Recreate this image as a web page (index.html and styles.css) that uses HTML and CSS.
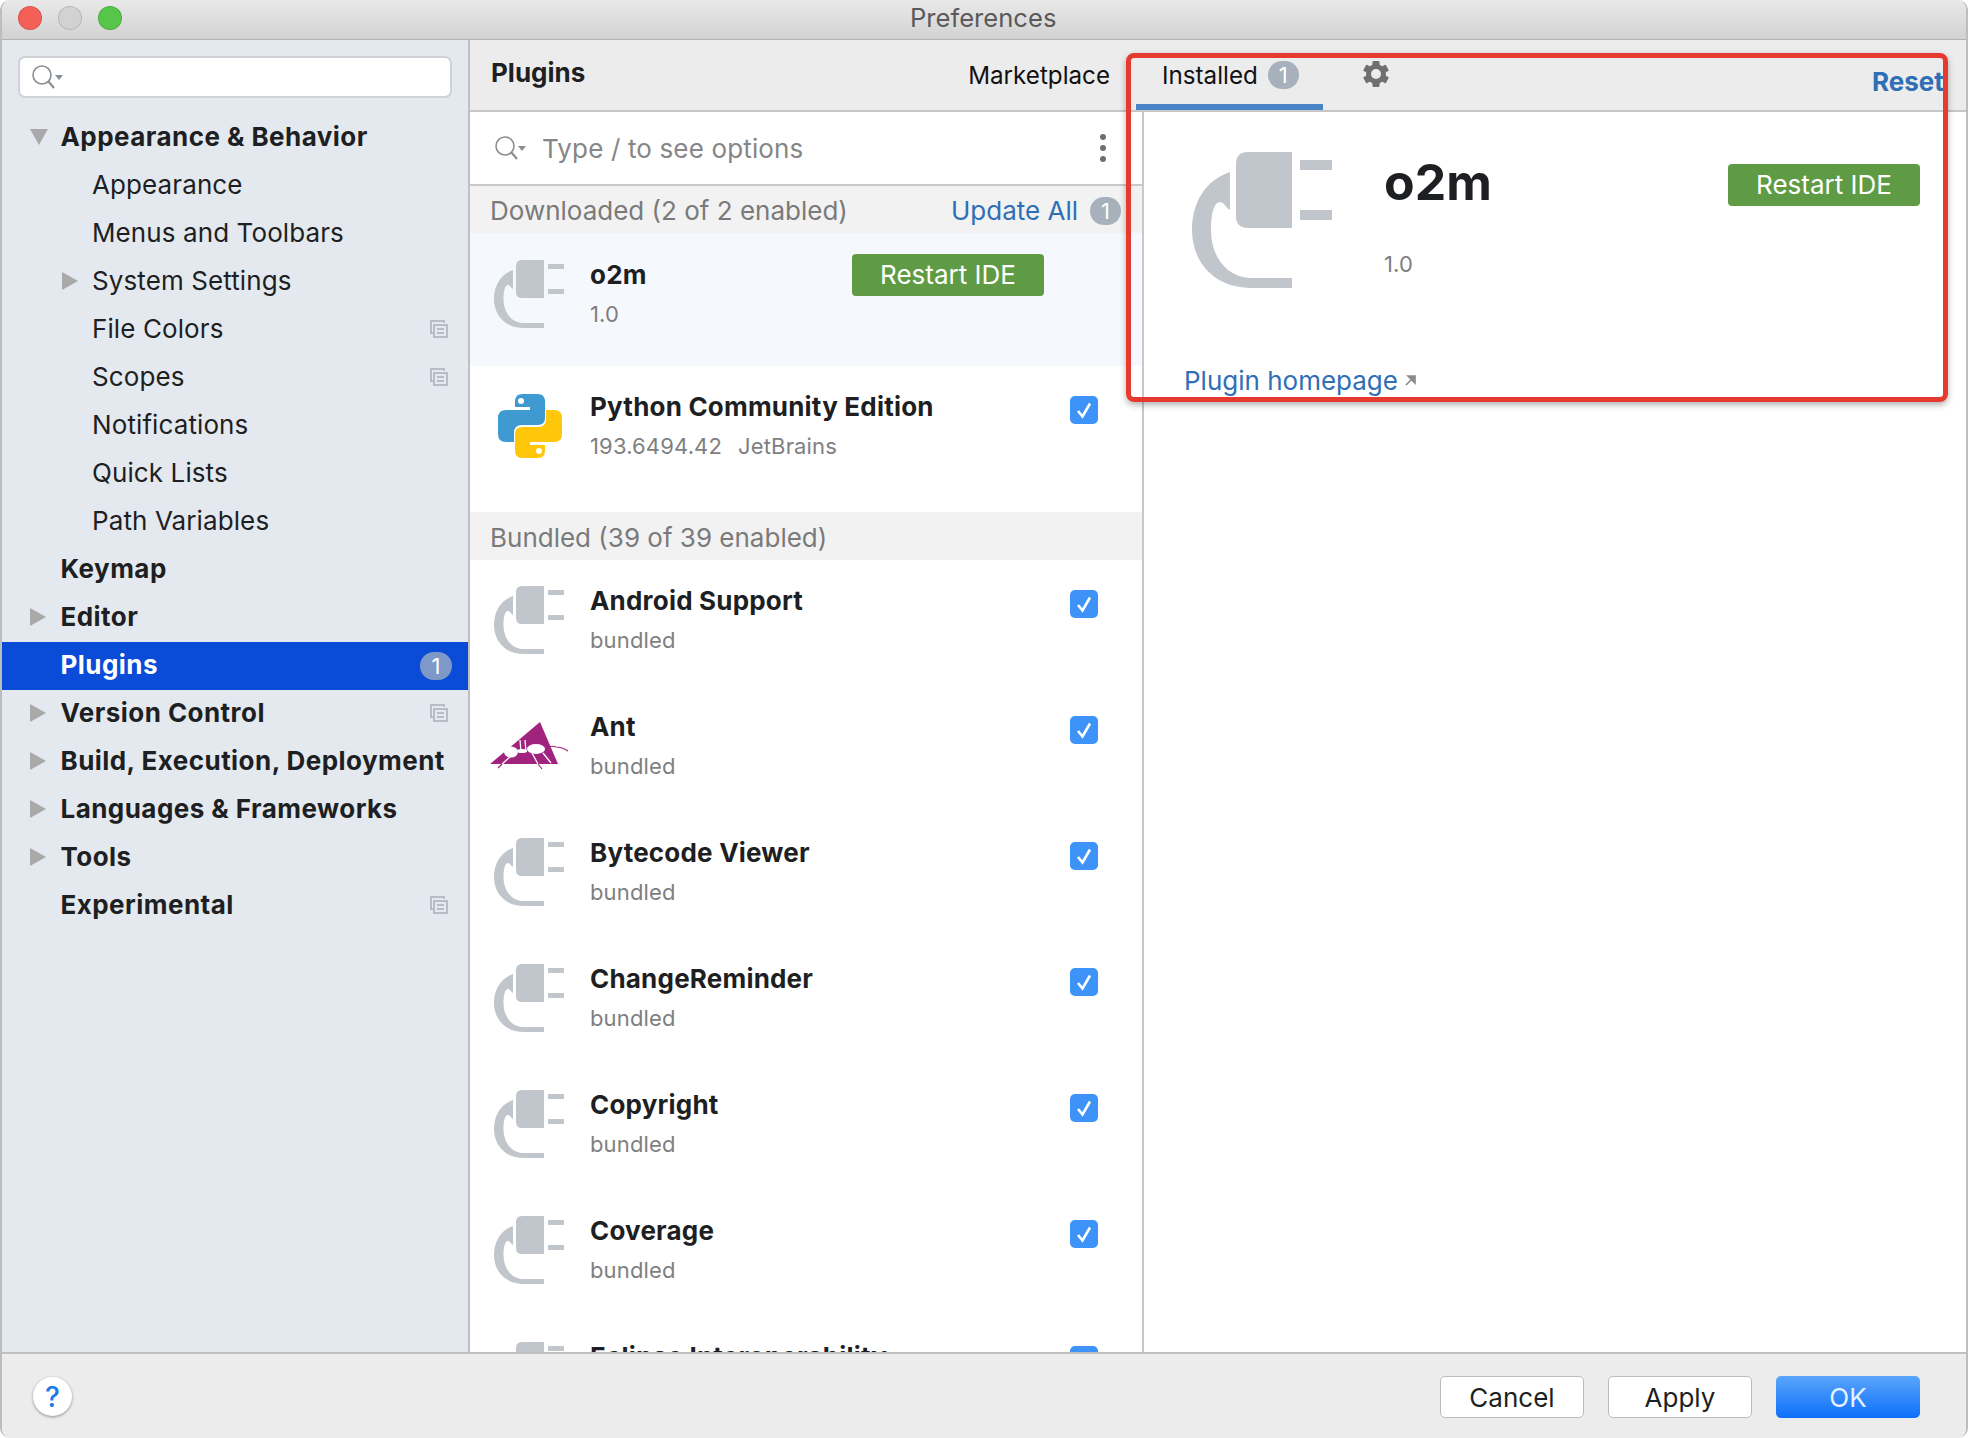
FILE: index.html
```html
<!DOCTYPE html>
<html lang="en">
<head>
    <meta charset="UTF-8">
    <meta name="viewport" content="width=device-width, initial-scale=1.0">
    <title>Preferences</title>
    <link rel="stylesheet" href="styles.css">
</head>
<body>
    <svg class="defs" aria-hidden="true">
        <symbol id="plug" viewBox="0 0 140 136">
            <path d="M44 12 Q44 0 56 0 H100 V76 H56 Q44 76 44 64 Z"/>
            <rect x="108" y="8" width="32" height="10"/>
            <rect x="108" y="58" width="32" height="10"/>
            <path d="M100 136 H60 C22 136 0 110 0 78 C0 50 14 28 38 20 V58 C34 56 32 50 28 50 C22 50 19 62 19 78 C19 106 36 126 60 126 H100 Z"/>
        </symbol>
        <symbol id="copy" viewBox="0 0 18 18">
            <path d="M14 3 V1 H1 V13 H3" fill="none" stroke="currentColor" stroke-width="1.5"/>
            <rect x="4" y="5" width="13" height="12" fill="none" stroke="currentColor" stroke-width="1.5"/>
            <path d="M7 9 H14 M7 13 H14" stroke="currentColor" stroke-width="1.5"/>
        </symbol>
        <symbol id="lens" viewBox="0 0 32 24">
            <circle cx="11" cy="10" r="9" fill="none" stroke="currentColor" stroke-width="1.6"/>
            <path d="M17 16 L23 23" stroke="currentColor" stroke-width="2.2"/>
            <path d="M24 10 H32 L28 15 Z" fill="currentColor"/>
        </symbol>
        <symbol id="check" viewBox="0 0 28 28">
            <rect width="28" height="28" rx="5" fill="#3d93f8"/>
            <path d="M8 15 L12.5 20.5 L20 7.5" fill="none" stroke="#fff" stroke-width="2.6"/>
        </symbol>
    </svg>

    <div class="window">
        <div class="titlebar">
            <span class="light light-red"></span>
            <span class="light light-gray"></span>
            <span class="light light-green"></span>
            <span class="window-title">Preferences</span>
        </div>

        <div class="main">
            <div class="sidebar">
                <div class="side-search">
                    <svg class="lens"><use href="#lens"/></svg>
                </div>
                <div class="tree">
                    <div class="row top"><span class="arrow arrow-down"></span>Appearance &amp; Behavior</div>
                    <div class="row sub"><span class="slot"></span>Appearance</div>
                    <div class="row sub"><span class="slot"></span>Menus and Toolbars</div>
                    <div class="row sub"><span class="arrow arrow-right"></span>System Settings</div>
                    <div class="row sub"><span class="slot"></span>File Colors<svg class="copy"><use href="#copy"/></svg></div>
                    <div class="row sub"><span class="slot"></span>Scopes<svg class="copy"><use href="#copy"/></svg></div>
                    <div class="row sub"><span class="slot"></span>Notifications</div>
                    <div class="row sub"><span class="slot"></span>Quick Lists</div>
                    <div class="row sub"><span class="slot"></span>Path Variables</div>
                    <div class="row top"><span class="slot"></span>Keymap</div>
                    <div class="row top"><span class="arrow arrow-right"></span>Editor</div>
                    <div class="row top selected"><span class="slot"></span>Plugins<span class="side-badge">1</span></div>
                    <div class="row top"><span class="arrow arrow-right"></span>Version Control<svg class="copy"><use href="#copy"/></svg></div>
                    <div class="row top"><span class="arrow arrow-right"></span>Build, Execution, Deployment</div>
                    <div class="row top"><span class="arrow arrow-right"></span>Languages &amp; Frameworks</div>
                    <div class="row top"><span class="arrow arrow-right"></span>Tools</div>
                    <div class="row top"><span class="slot"></span>Experimental<svg class="copy"><use href="#copy"/></svg></div>
                </div>
            </div>

            <div class="content">
                <div class="header">
                    <div class="header-left">
                        <span class="header-title">Plugins</span>
                        <span class="tab-label">Marketplace</span>
                    </div>
                    <div class="tab-active">
                        <span class="tab-label">Installed</span>
                        <span class="badge">1</span>
                    </div>
                    <svg class="gear" viewBox="0 0 26 26">
                        <g fill="#6f6f6f">
                            <rect x="9.5" y="0" width="7" height="26" rx="1"/>
                            <rect x="9.5" y="0" width="7" height="26" rx="1" transform="rotate(60 13 13)"/>
                            <rect x="9.5" y="0" width="7" height="26" rx="1" transform="rotate(120 13 13)"/>
                            <circle cx="13" cy="13" r="10"/>
                        </g>
                        <circle cx="13" cy="13" r="5" fill="#ececec"/>
                    </svg>
                    <a class="reset">Reset</a>
                </div>

                <div class="panes">
                    <div class="list">
                        <div class="list-search">
                            <svg class="lens"><use href="#lens"/></svg>
                            <span class="placeholder">Type / to see options</span>
                            <span class="kebab"><i></i><i></i><i></i></span>
                        </div>

                        <div class="section">
                            <span>Downloaded (2 of 2 enabled)</span>
                            <a class="update-all">Update All</a>
                            <span class="badge">1</span>
                        </div>
                        <div class="plugin plugin-current">
                            <span class="plugin-icon"><svg class="plug"><use href="#plug"/></svg></span>
                            <div>
                                <div class="plugin-name">o2m</div>
                                <div class="plugin-sub">1.0</div>
                            </div>
                            <button class="restart restart-list">Restart IDE</button>
                        </div>
                        <div class="plugin plugin-python">
                            <span class="plugin-icon">
                                <svg class="python" viewBox="0 0 64 64">
                                    <path fill="#3f9ad1" d="M24 0 H40 Q47 0 47 8 V24 Q47 31 40 31 H24 Q16 31 16 39 V48 H8 Q0 48 0 40 V24 Q0 16 8 16 H32 V13 H17 V8 Q17 0 24 0 Z"/>
                                    <circle cx="23" cy="7" r="3" fill="#fff"/>
                                    <g transform="rotate(180 32 32)">
                                        <path fill="#ffc60a" d="M24 0 H40 Q47 0 47 8 V24 Q47 31 40 31 H24 Q16 31 16 39 V48 H8 Q0 48 0 40 V24 Q0 16 8 16 H32 V13 H17 V8 Q17 0 24 0 Z"/>
                                        <circle cx="23" cy="7" r="3" fill="#fff"/>
                                    </g>
                                </svg>
                            </span>
                            <div>
                                <div class="plugin-name">Python Community Edition</div>
                                <div class="plugin-sub">193.6494.42<span class="vendor">JetBrains</span></div>
                            </div>
                            <svg class="check"><use href="#check"/></svg>
                        </div>

                        <div class="section section-bundled">
                            <span>Bundled (39 of 39 enabled)</span>
                        </div>
                        <div class="plugin">
                            <span class="plugin-icon"><svg class="plug"><use href="#plug"/></svg></span>
                            <div>
                                <div class="plugin-name">Android Support</div>
                                <div class="plugin-sub">bundled</div>
                            </div>
                            <svg class="check"><use href="#check"/></svg>
                        </div>
                        <div class="plugin">
                            <span class="plugin-icon">
                                <svg class="ant" viewBox="0 0 80 48">
                                    <path fill="#a0247e" d="M50 0 L68 42 H0 Z"/>
                                    <g fill="#fff">
                                        <ellipse cx="21" cy="30" rx="7" ry="5.5"/>
                                        <ellipse cx="32" cy="29" rx="5" ry="2"/>
                                        <ellipse cx="46" cy="27" rx="9" ry="5"/>
                                    </g>
                                    <g fill="none" stroke="#fff" stroke-width="1.3">
                                        <path d="M30 18 L31 30 M35 18 L36 30"/>
                                        <path d="M20 35 L12 42 M42 31 L48 42 M53 31 L61 41"/>
                                    </g>
                                    <g fill="none" stroke="#a0247e" stroke-width="1.1">
                                        <path d="M55 26 Q62 23 66 25 Q72 25 78 29"/>
                                        <path d="M12 42 L8 46 M48 42 L52 47"/>
                                    </g>
                                </svg>
                            </span>
                            <div>
                                <div class="plugin-name">Ant</div>
                                <div class="plugin-sub">bundled</div>
                            </div>
                            <svg class="check"><use href="#check"/></svg>
                        </div>
                        <div class="plugin">
                            <span class="plugin-icon"><svg class="plug"><use href="#plug"/></svg></span>
                            <div>
                                <div class="plugin-name">Bytecode Viewer</div>
                                <div class="plugin-sub">bundled</div>
                            </div>
                            <svg class="check"><use href="#check"/></svg>
                        </div>
                        <div class="plugin">
                            <span class="plugin-icon"><svg class="plug"><use href="#plug"/></svg></span>
                            <div>
                                <div class="plugin-name">ChangeReminder</div>
                                <div class="plugin-sub">bundled</div>
                            </div>
                            <svg class="check"><use href="#check"/></svg>
                        </div>
                        <div class="plugin">
                            <span class="plugin-icon"><svg class="plug"><use href="#plug"/></svg></span>
                            <div>
                                <div class="plugin-name">Copyright</div>
                                <div class="plugin-sub">bundled</div>
                            </div>
                            <svg class="check"><use href="#check"/></svg>
                        </div>
                        <div class="plugin">
                            <span class="plugin-icon"><svg class="plug"><use href="#plug"/></svg></span>
                            <div>
                                <div class="plugin-name">Coverage</div>
                                <div class="plugin-sub">bundled</div>
                            </div>
                            <svg class="check"><use href="#check"/></svg>
                        </div>
                        <div class="plugin">
                            <span class="plugin-icon"><svg class="plug"><use href="#plug"/></svg></span>
                            <div>
                                <div class="plugin-name">Eclipse Interoperability</div>
                            </div>
                            <svg class="check"><use href="#check"/></svg>
                        </div>
                    </div>

                    <div class="detail">
                        <div class="detail-top">
                            <svg class="plug-big"><use href="#plug"/></svg>
                            <div class="detail-info">
                                <div class="detail-name">o2m</div>
                                <div class="plugin-sub detail-version">1.0</div>
                            </div>
                            <button class="restart restart-detail">Restart IDE</button>
                        </div>
                        <a class="homepage">Plugin homepage<svg class="ext" viewBox="0 0 12 12"><path d="M4 1 H11 V8 Z M8 4 L2 10" fill="#8a8a8a" stroke="#8a8a8a" stroke-width="1.6"/></svg></a>
                    </div>
                </div>
            </div>
        </div>

        <div class="footer">
            <button class="help">?</button>
            <button class="btn">Cancel</button>
            <button class="btn">Apply</button>
            <button class="btn btn-ok">OK</button>
        </div>
    </div>

    <div class="annotation"></div>
</body>
</html>
```

FILE: styles.css
```css
html, body {
    margin: 0;
    height: 100%;
    overflow: hidden;
    background: #fff;
}
body {
    font-family: Inter, "Noto Sans", sans-serif;
    font-size: 26px;
    color: #1e1f22;
}
.defs {
    display: none;
}
button {
    font-family: inherit;
    cursor: pointer;
}
.window {
    box-sizing: border-box;
    width: 1968px;
    height: 1438px;
    border-left: 2px solid #bdbdbd;
    border-right: 2px solid #bdbdbd;
    border-radius: 10px;
    overflow: hidden;
    display: flex;
    flex-direction: column;
}

/* title bar */
.titlebar {
    box-sizing: border-box;
    height: 40px;
    flex: none;
    display: flex;
    align-items: center;
    padding: 0 0 4px 16px;
    gap: 16px;
    background: linear-gradient(#e9e9e9, #d2d2d2);
    border-bottom: 1px solid #b4b4b4;
}
.light {
    width: 24px;
    height: 24px;
    border-radius: 50%;
    box-sizing: border-box;
    border: 1px solid rgba(0, 0, 0, 0.12);
}
.light-red { background: #f45f58; }
.light-gray { background: #d2d2d2; }
.light-green { background: #57c44a; }
.window-title {
    margin-left: 772px;
    font-size: 25.6px;
    color: #5a5a5a;
}

.main {
    flex: 1;
    display: flex;
    min-height: 0;
}

/* left tree */
.sidebar {
    box-sizing: border-box;
    width: 468px;
    flex: none;
    background: #e4e9ef;
    border-right: 2px solid #c0c0c0;
}
.side-search {
    box-sizing: border-box;
    height: 42px;
    margin: 16px 16px 16px 16px;
    padding: 7px 0 0 11px;
    background: #fff;
    border: 2px solid #cfd2d6;
    border-radius: 7px;
}
.lens {
    display: block;
    width: 32px;
    height: 24px;
    color: #8a8f94;
}
.row {
    box-sizing: border-box;
    height: 48px;
    padding-bottom: 4px;
    display: flex;
    align-items: center;
    white-space: nowrap;
    letter-spacing: 0.1px;
}
.row.top {
    font-weight: 700;
    padding-left: 28px;
    letter-spacing: 0.45px;
}
.row.sub {
    padding-left: 60px;
}
.slot, .arrow {
    width: 30.5px;
    flex: none;
}
.row.sub .slot, .row.sub .arrow {
    width: 30px;
}
.arrow {
    box-sizing: border-box;
    height: 0;
    margin-top: 2px;
}
.arrow-right {
    border-left: 16px solid #a9a9a9;
    border-top: 9px solid transparent;
    border-bottom: 9px solid transparent;
    border-right: 0;
}
.arrow-down {
    position: relative;
}
.arrow-down::before {
    content: "";
    position: absolute;
    left: 0;
    top: -8px;
    border-top: 16px solid #a9a9a9;
    border-left: 9px solid transparent;
    border-right: 9px solid transparent;
}
.copy {
    width: 18px;
    height: 18px;
    margin: 2px 20px 0 auto;
    color: #a7afb6;
}
.selected {
    background: #0a4bd8;
    color: #fff;
}
.side-badge {
    margin: 4px 16px 0 auto;
    width: 32px;
    height: 28px;
    border-radius: 14px;
    background: #7e99c8;
    font-size: 22px;
    font-weight: 400;
    line-height: 28px;
    text-align: center;
    letter-spacing: 0;
}

/* right side */
.content {
    flex: 1;
    min-width: 0;
    display: flex;
    flex-direction: column;
}
.header {
    box-sizing: border-box;
    height: 72px;
    flex: none;
    display: flex;
    background: #ececec;
    border-bottom: 2px solid #c6c6c6;
}
.header-left {
    width: 619px;
    flex: none;
    margin-left: 21px;
    display: flex;
    justify-content: space-between;
    align-items: center;
    height: 64px;
    box-sizing: border-box;
}
.header-title {
    font-weight: 700;
}
.tab-label {
    padding-top: 7px;
    color: #111;
    font-size: 24.2px;
}
.tab-active {
    box-sizing: border-box;
    width: 187px;
    height: 70px;
    margin-left: 26px;
    padding: 6px 0 0 26px;
    display: flex;
    align-items: center;
    gap: 10px;
    border-bottom: 6px solid #4a83c8;
}
.tab-active .tab-label {
    padding-top: 0;
}
.badge {
    width: 31px;
    height: 28px;
    border-radius: 14px;
    background: #a6b1bb;
    color: #fff;
    font-size: 22px;
    line-height: 28px;
    text-align: center;
    flex: none;
}
.gear {
    width: 26px;
    height: 26px;
    flex: none;
    margin: 21px 0 0 40px;
}
.reset {
    margin: 24px 0 0 auto;
    width: 94px;
    color: #2f6fb5;
    font-weight: 700;
    line-height: 36px;
    height: 36px;
}
.panes {
    flex: 1;
    min-height: 0;
    display: flex;
}

/* plugin list */
.list {
    box-sizing: border-box;
    width: 674px;
    flex: none;
    overflow: hidden;
    border-right: 2px solid #c8c8c8;
}
.list-search {
    box-sizing: border-box;
    height: 74px;
    display: flex;
    align-items: center;
    padding-left: 24px;
    border-bottom: 2px solid #c8c8c8;
}
.placeholder {
    margin-left: 16px;
    color: #868686;
    letter-spacing: 0.15px;
}
.kebab {
    margin-left: auto;
    margin-right: 36px;
    display: flex;
    flex-direction: column;
    gap: 5px;
}
.kebab i {
    display: block;
    width: 6px;
    height: 6px;
    border-radius: 50%;
    background: #6f6f6f;
}
.section {
    box-sizing: border-box;
    height: 47px;
    padding: 2px 0 0 20px;
    display: flex;
    align-items: center;
    background: #f2f2f2;
    color: #7a7a7a;
}
.section-bundled {
    height: 48px;
}
.update-all {
    margin-left: auto;
    margin-right: 12px;
    color: #2f6fb5;
}
.section .badge {
    margin-right: 21px;
}
.plugin {
    box-sizing: border-box;
    height: 126px;
    padding-top: 26px;
    display: flex;
}
.plugin-current {
    height: 133px;
    padding-top: 27px;
    background: #f5f8fd;
}
.plugin-python {
    height: 146px;
}
.plugin-icon {
    width: 70px;
    flex: none;
    margin: 0 26px 0 24px;
}
.plug {
    display: block;
    width: 70px;
    height: 68px;
    fill: #c0c6cb;
}
.python {
    display: block;
    width: 64px;
    height: 64px;
    margin: 2px 0 0 4px;
}
.ant {
    display: block;
    width: 80px;
    height: 48px;
    margin: 10px 0 0 -4px;
}
.plugin-name {
    font-weight: 700;
    line-height: 30px;
    white-space: nowrap;
    letter-spacing: 0.2px;
}
.plugin-sub {
    margin-top: 9px;
    font-size: 22px;
    line-height: 30px;
    color: #7f7f7f;
    letter-spacing: 0.15px;
}
.vendor {
    margin-left: 16px;
}
.check {
    width: 28px;
    height: 28px;
    flex: none;
    margin: 4px 44px 0 auto;
}
.restart {
    width: 192px;
    height: 42px;
    padding: 0 0 2px;
    flex: none;
    background: #5f9b45;
    color: #fff;
    font-size: 26px;
    border: none;
    border-radius: 4px;
}
.restart-list {
    margin: -6px 98px 0 auto;
}

/* detail pane */
.detail {
    flex: 1;
    min-width: 0;
    padding-left: 40px;
}
.detail-top {
    display: flex;
    height: 176px;
    padding-left: 8px;
}
.plug-big {
    width: 140px;
    height: 136px;
    margin-top: 40px;
    flex: none;
    fill: #c0c6cb;
}
.detail-info {
    margin: 40px 0 0 52px;
}
.detail-name {
    font-size: 50px;
    font-weight: 700;
    line-height: 60px;
}
.detail-version {
    margin-top: 37px;
}
.restart-detail {
    margin: 52px 46px 0 auto;
}
.homepage {
    display: block;
    margin-top: 78px;
    line-height: 30px;
    color: #2f6fb5;
}
.ext {
    width: 12px;
    height: 12px;
    margin-left: 6px;
    vertical-align: 3px;
}

/* bottom buttons */
.footer {
    box-sizing: border-box;
    height: 86px;
    flex: none;
    display: flex;
    align-items: flex-start;
    gap: 24px;
    padding: 22px 46px 0 31px;
    background: #ececec;
    border-top: 2px solid #c0c0c0;
}
.help {
    width: 39px;
    height: 39px;
    margin-right: auto;
    margin-top: 1px;
    padding: 0;
    border: none;
    border-radius: 50%;
    background: #fff;
    box-shadow: 0 1px 3px rgba(0, 0, 0, 0.4);
    color: #1a7ae8;
    font-size: 28px;
    font-weight: 500;
}
.btn {
    box-sizing: border-box;
    width: 144px;
    height: 42px;
    padding: 0;
    background: #fff;
    border: 1px solid #bcbcbc;
    border-radius: 5px;
    color: #1e1f22;
    font-size: 26px;
}
.btn-ok {
    border: none;
    background: linear-gradient(#5aa5fb, #0d6ffa);
    color: #e6f1ff;
}

/* red box drawn over the screenshot */
.annotation {
    position: absolute;
    box-sizing: border-box;
    left: 1126px;
    top: 53px;
    width: 822px;
    height: 349px;
    border: 5px solid #e63a2e;
    border-radius: 8px;
    box-shadow: 0 3px 6px rgba(0, 0, 0, 0.3);
}
```
